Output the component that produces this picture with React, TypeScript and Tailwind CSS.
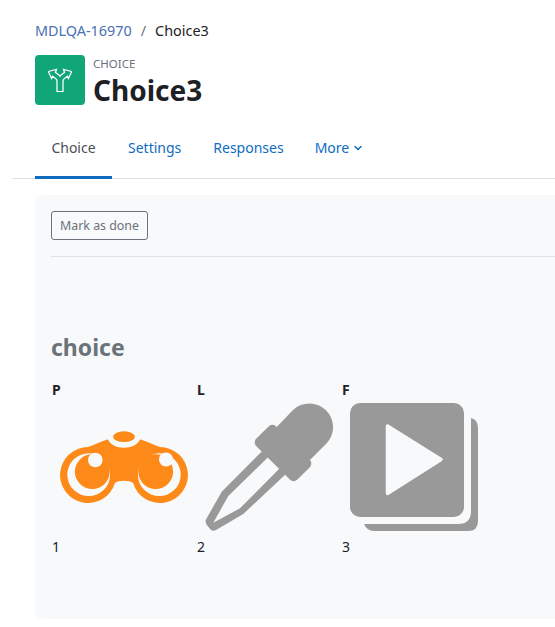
import React from 'react';
import { ChevronDown } from 'lucide-react';

const Binoculars: React.FC = () => (
  <svg width="128" height="128" viewBox="0 0 128 128" className="block">
    <path
      fill="#fd8a18"
      d="M28 44 C34 42 42 38 48 36.3 L80 36.3 C86 38 94 42 100 44 A28 28 0 1 1 73.1 80 Q70 77.7 64 77.7 Q58 77.7 54.9 80 A28 28 0 1 1 28 44 Z"
    />
    <ellipse cx="64" cy="33.7" rx="16.5" ry="11" fill="#f8f9fa" />
    <ellipse cx="64" cy="33.7" rx="11" ry="5.4" fill="#fd8a18" />
    <circle cx="28.7" cy="71.7" r="21.4" fill="#f8f9fa" />
    <circle cx="99.3" cy="71.7" r="21.4" fill="#f8f9fa" />
    <circle cx="32.3" cy="68.7" r="17.4" fill="#fd8a18" />
    <circle cx="95.7" cy="68.7" r="17.4" fill="#fd8a18" />
    <path fill="#fd8a18" d="M44 48 L84 48 L80 62 L48 62 Z" />
    <circle cx="35.3" cy="57" r="7.3" fill="#f8f9fa" />
    <circle cx="106" cy="56.5" r="7" fill="#f8f9fa" />
  </svg>
);

const Dropper: React.FC = () => (
  <svg width="128" height="128" viewBox="0 0 128 128" className="block">
    <path fill="#999999" d="M88 7 A23.7 23.7 0 0 1 121.7 40.3 L98 64 L65 31 Z" />
    <rect x="49" y="36" width="58" height="28" rx="5" transform="rotate(45 78 50)" fill="#999999" />
    <path
      fill="#999999"
      fillRule="evenodd"
      d="M58.3 47 L16.7 88.7 L0.7 117 Q0 120 3 123.5 L6 127 Q8.3 128.5 11 127 L38.3 111 L81.7 70.3 Z M64.3 53 L75.7 64.3 L35 105.3 L8.3 119.7 L23.3 93 Z"
    />
  </svg>
);

const PlayStack: React.FC = () => (
  <svg width="128" height="128" viewBox="0 0 128 128" className="block">
    <rect x="0" y="0" width="114" height="114" rx="10" fill="#999999" />
    <path
      fill="#999999"
      d="M121 15 Q128 16.5 128 25 L128 118 Q128 128 118 128 L24 128 Q17 128 14 121 L108 121 Q121 121 121 108 Z"
    />
    <path
      d="M37.5 23 L37.5 90.5 L91 56.5 Z"
      fill="#f8f9fa"
      stroke="#f8f9fa"
      strokeWidth="3.5"
      strokeLinejoin="round"
    />
  </svg>
);

const ChoiceIcon: React.FC = () => (
  <svg width="24" height="24" viewBox="0 0 24 24" fill="none" stroke="white" strokeWidth="1.25" strokeLinejoin="miter">
    <path d="M9 23.5 L15 23.5 L15 13 Q15 11.5 16.5 10.5 L19.5 8.3 L20.5 10.5 L23.7 3.5 L15.5 1.5 L16.5 4.5 L13 7 Q12 7.8 12 8.8 Q12 7.8 11 7 L7.5 4.5 L8.5 1.5 L0.3 3.5 L3.5 10.5 L4.5 8.3 L7.5 10.5 Q9 11.5 9 13 Z" />
  </svg>
);

const opciones = [
  { letra: 'P', numero: '1', Imagen: Binoculars },
  { letra: 'L', numero: '2', Imagen: Dropper },
  { letra: 'F', numero: '3', Imagen: PlayStack },
];

export default function App() {
  return (
    <div className="w-[555px] h-[627px] overflow-hidden bg-white pt-[21px] text-[#1d2125] font-['Noto_Sans',sans-serif] text-[14px]">
      <div className="pl-[35px] h-[20px] leading-[20px] flex items-center text-[14.4px]">
        <span className="text-[#4a6fb5]">MDLQA-16970</span>
        <span className="text-[#6a737b] ml-[9px] mr-[9px]">/</span>
        <span>Choice3</span>
      </div>

      <div className="pl-[35px] mt-[14px] flex items-start">
        <div className="w-[50px] h-[50px] rounded-[4px] bg-[#11a676] flex items-center justify-center">
          <ChoiceIcon />
        </div>
        <div className="ml-[8px]">
          <div className="text-[11.5px] leading-[16px] mt-[1px] text-[#6a737b]">CHOICE</div>
          <h1 className="text-[28px] leading-[34px] font-bold mt-[1px]">Choice3</h1>
        </div>
      </div>

      <div className="ml-[12px] mt-[20px] border-b border-[#dee2e6] h-[52px]">
        <div className="flex pl-[23px] h-[52px] text-[#0f6cbf]">
          <div className="w-[77px] h-[52px] pb-[9px] border-b-[3px] border-[#0f6cbf] flex items-center justify-center text-[#495057]">
            Choice
          </div>
          <div className="ml-[16px] h-[52px] pb-[12px] flex items-center">Settings</div>
          <div className="ml-[32px] h-[52px] pb-[12px] flex items-center">Responses</div>
          <div className="ml-[31px] h-[52px] pb-[12px] flex items-center">
            More
            <ChevronDown size={12} strokeWidth={3} className="ml-[3px] mt-[2px]" />
          </div>
        </div>
      </div>

      <div className="ml-[35px] mt-[16px] w-[560px] h-[424px] rounded-[8px] bg-[#f8f9fa] pt-[16px] pl-[16px]">
        <button className="block w-[97px] h-[29px] pt-[2px] rounded-[3px] border border-[#6a737b] text-[#6a737b] text-[12.4px] leading-none">
          Mark as done
        </button>
        <div className="mt-[16px] border-t border-[#dee2e6]" />
        <h2 className="mt-[74px] text-[23px] leading-[32px] font-bold text-[#6a737b]">choice</h2>
        <div className="mt-[17px] flex">
          {opciones.map(({ letra, numero, Imagen }) => (
            <div key={letra} className="w-[145px] pl-[1px]">
              <div className="font-bold leading-[20px] h-[20px]">{letra}</div>
              <div className="pl-[8px] mt-[3px]">
                <Imagen />
              </div>
              <div className="mt-[6px] leading-[20px]">{numero}</div>
            </div>
          ))}
        </div>
      </div>
    </div>
  );
}
